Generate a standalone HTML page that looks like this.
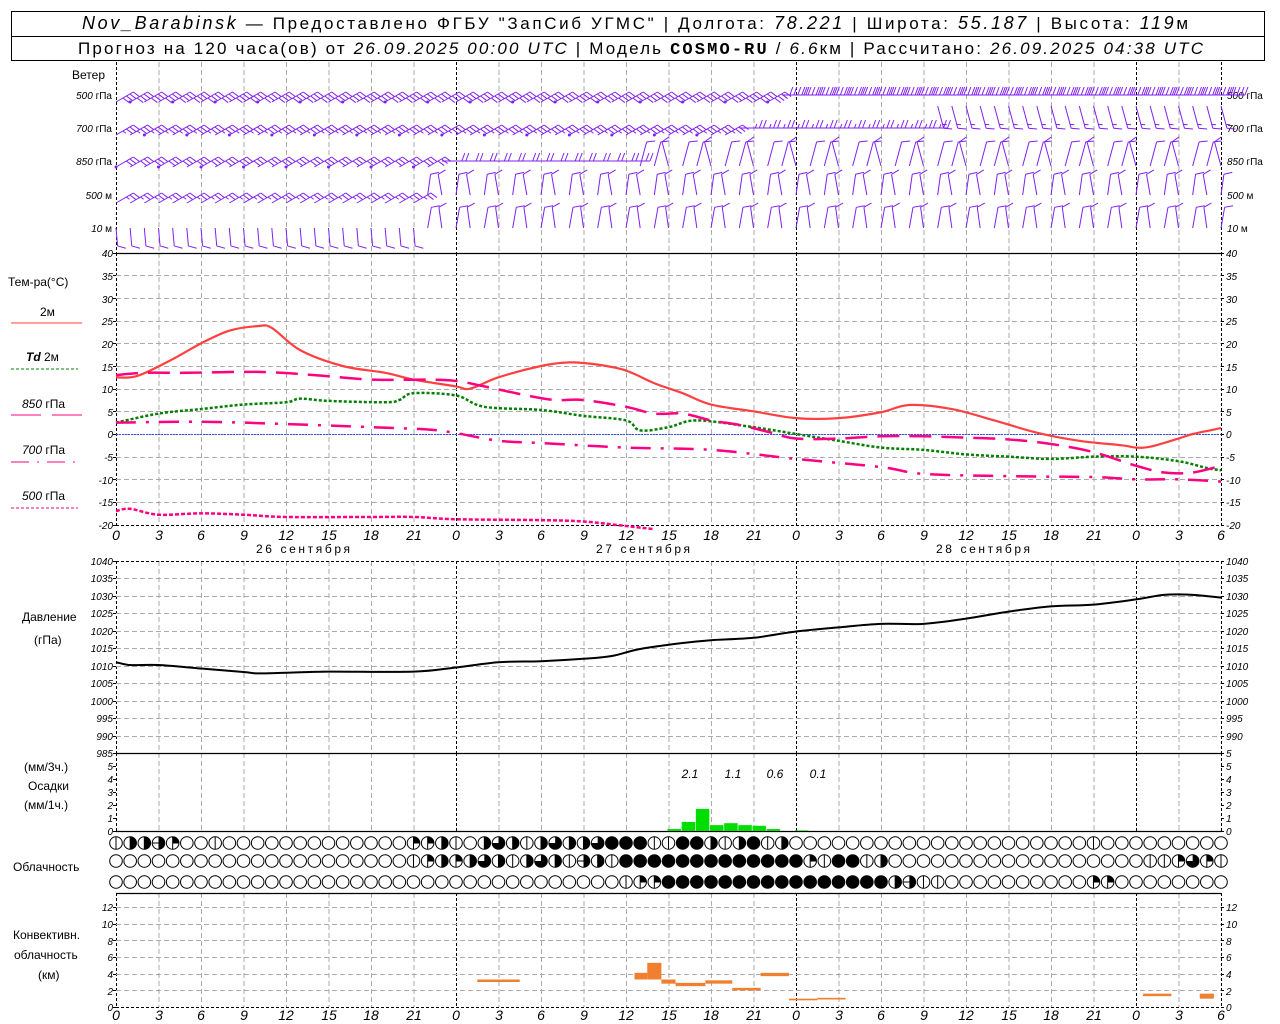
<!DOCTYPE html>
<html><head><meta charset="utf-8"><style>
html,body{margin:0;padding:0;background:#fff;width:1280px;height:1024px;overflow:hidden}
svg{display:block}
text{font-family:"Liberation Sans","DejaVu Sans",sans-serif;fill:#000}
.hd{font-size:17px}
.it{font-style:italic}
.ax{font-size:10px;font-style:italic}
.lb{font-size:12px}
.xl{font-size:14px;font-style:italic}
</style></head><body>
<svg id="s" width="1280" height="1024" viewBox="0 0 1280 1024" xmlns="http://www.w3.org/2000/svg">
<rect x="0" y="0" width="1280" height="1024" fill="#fff"/>
<rect x="11.5" y="11.5" width="1253" height="49" fill="none" stroke="#000"/>
<line x1="11" y1="36.5" x2="1265" y2="36.5" stroke="#000"/>
<g id="grid"></g>
<text class="hd" x="82" y="29" textLength="1106" lengthAdjust="spacing"><tspan class="it" font-size="18">Nov_Barabinsk</tspan> — Предоставлено ФГБУ "ЗапСиб УГМС" | Долгота: <tspan class="it" font-size="18">78.221</tspan> | Широта: <tspan class="it" font-size="18">55.187</tspan> | Высота: <tspan class="it" font-size="18">119</tspan>м</text>
<text class="hd" x="78" y="54" textLength="1125" lengthAdjust="spacing">Прогноз на 120 часа(ов) от <tspan class="it">26.09.2025 00:00 UTC</tspan>  | Модель <tspan font-family="Liberation Mono" font-weight="bold">COSMO-RU</tspan> / <tspan class="it">6.6</tspan>км | Рассчитано: <tspan class="it">26.09.2025 04:38 UTC</tspan></text>

<text class="lb" x="72" y="79">Ветер</text>
<g font-size="10">
<text x="112" y="99" text-anchor="end" style="font-size:10px"><tspan font-style="italic">500</tspan> гПа</text>
<text x="112" y="132" text-anchor="end" style="font-size:10px"><tspan font-style="italic">700</tspan> гПа</text>
<text x="112" y="165" text-anchor="end" style="font-size:10px"><tspan font-style="italic">850</tspan> гПа</text>
<text x="112" y="199" text-anchor="end" style="font-size:10px"><tspan font-style="italic">500</tspan> м</text>
<text x="112" y="232" text-anchor="end" style="font-size:10px"><tspan font-style="italic">10</tspan>   м</text>
<text x="1227" y="99" style="font-size:10px"><tspan font-style="italic">500</tspan> гПа</text>
<text x="1227" y="132" style="font-size:10px"><tspan font-style="italic">700</tspan> гПа</text>
<text x="1227" y="165" style="font-size:10px"><tspan font-style="italic">850</tspan> гПа</text>
<text x="1227" y="199" style="font-size:10px"><tspan font-style="italic">500</tspan> м</text>
<text x="1227" y="232" style="font-size:10px"><tspan font-style="italic">10</tspan>   м</text>
</g>

<text class="lb" x="8" y="286">Тем-ра(°C)</text>
<text class="lb" x="40" y="316" font-size="11">2м</text>
<line x1="11" y1="323" x2="82" y2="323" stroke="#ff4040"/>
<text class="lb" x="26" y="361" font-size="11"><tspan class="it" font-weight="bold">Td</tspan>  2м</text>
<line x1="11" y1="369" x2="78" y2="369" stroke="#008000" stroke-dasharray="3,2"/>
<text class="lb" x="22" y="408" font-size="11"><tspan font-style="italic">850</tspan> гПа</text>
<line x1="11" y1="415" x2="41" y2="415" stroke="#ff0080"/><line x1="52" y1="415" x2="82" y2="415" stroke="#ff0080"/>
<text class="lb" x="22" y="454" font-size="11"><tspan font-style="italic">700</tspan> гПа</text>
<line x1="11" y1="462" x2="78" y2="462" stroke="#ff0080" stroke-dasharray="18,8,2,8"/>
<text class="lb" x="22" y="500" font-size="11"><tspan font-style="italic">500</tspan> гПа</text>
<line x1="11" y1="508" x2="78" y2="508" stroke="#ff0080" stroke-dasharray="3,2"/>

<text class="lb" x="22" y="621">Давление</text>
<text class="lb" x="34" y="644">(гПа)</text>
<text class="lb" x="24" y="771">(мм/3ч.)</text>
<text class="lb" x="28" y="790">Осадки</text>
<text class="lb" x="24" y="809">(мм/1ч.)</text>
<text class="lb" x="13" y="871">Облачность</text>
<text class="lb" x="13" y="939">Конвективн.</text>
<text class="lb" x="14" y="959">облачность</text>
<text class="lb" x="38" y="979">(км)</text>

<g class="ax">
<text x="113" y="257" text-anchor="end">40</text><text x="113" y="303" text-anchor="end">30</text><text x="113" y="280" text-anchor="end">35</text><text x="113" y="325" text-anchor="end">25</text><text x="113" y="348" text-anchor="end">20</text><text x="113" y="371" text-anchor="end">15</text><text x="113" y="393" text-anchor="end">10</text><text x="113" y="416" text-anchor="end">5</text><text x="113" y="438" text-anchor="end">0</text><text x="113" y="461" text-anchor="end">-5</text><text x="113" y="484" text-anchor="end">-10</text><text x="113" y="506" text-anchor="end">-15</text><text x="113" y="529" text-anchor="end">-20</text>
<text x="1226" y="257">40</text><text x="1226" y="280">35</text><text x="1226" y="303">30</text><text x="1226" y="325">25</text><text x="1226" y="348">20</text><text x="1226" y="371">15</text><text x="1226" y="393">10</text><text x="1226" y="416">5</text><text x="1226" y="438">0</text><text x="1226" y="461">-5</text><text x="1226" y="484">-10</text><text x="1226" y="506">-15</text><text x="1226" y="529">-20</text>
<text x="113" y="565" text-anchor="end">1040</text><text x="113" y="582" text-anchor="end">1035</text><text x="113" y="600" text-anchor="end">1030</text><text x="113" y="617" text-anchor="end">1025</text><text x="113" y="635" text-anchor="end">1020</text><text x="113" y="652" text-anchor="end">1015</text><text x="113" y="670" text-anchor="end">1010</text><text x="113" y="687" text-anchor="end">1005</text><text x="113" y="705" text-anchor="end">1000</text><text x="113" y="722" text-anchor="end">995</text><text x="113" y="740" text-anchor="end">990</text><text x="113" y="757" text-anchor="end">985</text>
<text x="1226" y="565">1040</text><text x="1226" y="582">1035</text><text x="1226" y="600">1030</text><text x="1226" y="617">1025</text><text x="1226" y="635">1020</text><text x="1226" y="652">1015</text><text x="1226" y="670">1010</text><text x="1226" y="687">1005</text><text x="1226" y="705">1000</text><text x="1226" y="722">995</text><text x="1226" y="740">990</text>
<text x="1226" y="757">5</text><text x="1226" y="770">5</text><text x="1226" y="783">4</text><text x="1226" y="796">3</text><text x="1226" y="809">2</text><text x="1226" y="822">1</text><text x="1226" y="835">0</text>
<text x="113" y="770" text-anchor="end">5</text><text x="113" y="783" text-anchor="end">4</text><text x="113" y="796" text-anchor="end">3</text><text x="113" y="809" text-anchor="end">2</text><text x="113" y="822" text-anchor="end">1</text><text x="113" y="835" text-anchor="end">0</text>
<text x="113" y="911" text-anchor="end">12</text><text x="113" y="928" text-anchor="end">10</text><text x="113" y="945" text-anchor="end">8</text><text x="113" y="961" text-anchor="end">6</text><text x="113" y="978" text-anchor="end">4</text><text x="113" y="995" text-anchor="end">2</text><text x="113" y="1011" text-anchor="end">0</text>
<text x="1226" y="911">12</text><text x="1226" y="928">10</text><text x="1226" y="945">8</text><text x="1226" y="961">6</text><text x="1226" y="978">4</text><text x="1226" y="995">2</text><text x="1226" y="1011">0</text>
</g>
<g class="xl" text-anchor="middle">
<text x="116" y="540">0</text><text x="159" y="540">3</text><text x="201" y="540">6</text><text x="244" y="540">9</text><text x="286" y="540">12</text><text x="329" y="540">15</text><text x="371" y="540">18</text><text x="414" y="540">21</text><text x="456" y="540">0</text><text x="499" y="540">3</text><text x="541" y="540">6</text><text x="584" y="540">9</text><text x="626" y="540">12</text><text x="669" y="540">15</text><text x="711" y="540">18</text><text x="754" y="540">21</text><text x="796" y="540">0</text><text x="839" y="540">3</text><text x="881" y="540">6</text><text x="924" y="540">9</text><text x="966" y="540">12</text><text x="1009" y="540">15</text><text x="1051" y="540">18</text><text x="1094" y="540">21</text><text x="1136" y="540">0</text><text x="1179" y="540">3</text><text x="1221" y="540">6</text>
<text x="116" y="1020">0</text><text x="159" y="1020">3</text><text x="201" y="1020">6</text><text x="244" y="1020">9</text><text x="286" y="1020">12</text><text x="329" y="1020">15</text><text x="371" y="1020">18</text><text x="414" y="1020">21</text><text x="456" y="1020">0</text><text x="499" y="1020">3</text><text x="541" y="1020">6</text><text x="584" y="1020">9</text><text x="626" y="1020">12</text><text x="669" y="1020">15</text><text x="711" y="1020">18</text><text x="754" y="1020">21</text><text x="796" y="1020">0</text><text x="839" y="1020">3</text><text x="881" y="1020">6</text><text x="924" y="1020">9</text><text x="966" y="1020">12</text><text x="1009" y="1020">15</text><text x="1051" y="1020">18</text><text x="1094" y="1020">21</text><text x="1136" y="1020">0</text><text x="1179" y="1020">3</text><text x="1221" y="1020">6</text>
</g>
<g class="lb" text-anchor="middle" font-size="12">
<text x="303" y="553" textLength="94" lengthAdjust="spacing">26 сентября</text><text x="643" y="553" textLength="94" lengthAdjust="spacing">27 сентября</text><text x="983" y="553" textLength="94" lengthAdjust="spacing">28 сентября</text>
</g>
<g text-anchor="middle">
<text x="690" y="778" style="font-size:12px;font-style:italic">2.1</text><text x="733" y="778" style="font-size:12px;font-style:italic">1.1</text><text x="775" y="778" style="font-size:12px;font-style:italic">0.6</text><text x="818" y="778" style="font-size:12px;font-style:italic">0.1</text>
</g>
<g id="data"></g>
</svg>
<script>
(function(){
var NS="http://www.w3.org/2000/svg";
var G=document.getElementById('grid'),D=document.getElementById('data');
function el(p,tag,a){var e=document.createElementNS(NS,tag);for(var k in a)e.setAttribute(k,a[k]);p.appendChild(e);return e;}
function L(p,x1,y1,x2,y2,c,w,da){var a={x1:x1,y1:y1,x2:x2,y2:y2,stroke:c,'stroke-width':w||1};if(da)a['stroke-dasharray']=da;return el(p,'line',a);}
function X(h){return 116+h*340/24;}
var x0=116,x1=1221;
var segs=[[62,253],[253,525],[561,753],[753,831],[893,1007]];
for(var h=0;h<=78;h+=3){var x=X(h)+0.5;var day=(h%24==0)||h==78;
 segs.forEach(function(s){L(G,x,s[0],x,s[1],day?'#000':'#aaa',1,day?'3,2':'5,3');});}
for(var v=-20;v<=40;v+=5){var y=Math.round(434-v*272/60)+0.5;
 if(v==40)L(G,x0,y,x1,y,'#000',1.2);else if(v==-20)L(G,x0,y,x1,y,'#000',1,'3,2');else L(G,x0,y,x1,y,'#aaa',1,'5,3');
 L(G,x0-3,y,x0,y,'#000');L(G,x1,y,x1+3,y,'#000');}
L(G,x0,434.5,x1,434.5,'#3050ff',1,'2,1');
for(var p=985;p<=1040;p+=5){var y=Math.round(753-(p-985)*192/55)+0.5;
 if(p==985)L(G,x0,y,x1,y,'#000',1.2);else if(p==1040)L(G,x0,y,x1,y,'#000',1,'3,2');else L(G,x0,y,x1,y,'#aaa',1,'5,3');
 L(G,x0-3,y,x0,y,'#000');L(G,x1,y,x1+3,y,'#000');}
L(G,x0,831.5,x1,831.5,'#000',1.2);
for(var i=0;i<=5;i++){var y=831.5-i*13;L(G,x0-3,y,x0,y,'#000');L(G,x1,y,x1+3,y,'#000');}
L(G,x0,893.5,x1,893.5,'#000',1.2);
for(var k=0;k<=12;k+=2){var y=Math.round(1007-k*100/12)+0.5;
 if(k==0)L(G,x0,y,x1,y,'#000',1,'3,2');else L(G,x0,y,x1,y,'#aaa',1,'5,3');
 L(G,x0-3,y,x0,y,'#000');L(G,x1,y,x1+3,y,'#000');}

function path(pts,fx,fy,attrs){var P=pts.map(function(q){return [X(q[0]),fy(q[1])];});
 var d='M'+P[0][0]+','+P[0][1];
 for(var i=0;i<P.length-1;i++){var p0=P[i-1]||P[i],p1=P[i],p2=P[i+1],p3=P[i+2]||p2;
  d+=' C'+(p1[0]+(p2[0]-p0[0])/6)+','+(p1[1]+(p2[1]-p0[1])/6)+' '+(p2[0]-(p3[0]-p1[0])/6)+','+(p2[1]-(p3[1]-p1[1])/6)+' '+p2[0]+','+p2[1];}
 attrs.d=d;attrs.fill='none';el(D,'path',attrs);}
function TY(v){return 434-v*272/60;}
path([[0,12.5],[1.5,12.8],[4,16.5],[6,20],[8,22.8],[10,23.8],[11,23.4],[13,18.5],[16,15],[19,13.5],[21,12],[24,10.5],[25,10],[27,12.5],[30,15],[32,15.8],[34,15.3],[36,14],[38,11.2],[40,9],[42,6.5],[45,5],[48,3.5],[51,3.5],[54,4.8],[56,6.4],[59,5.5],[62,3],[65,0.3],[68,-1.5],[71,-2.5],[72,-3],[73,-2.8],[75,-1],[76,0],[78,1.3]],X,TY,{stroke:'#ff4040','stroke-width':2.2});
path([[0,2.5],[3,4.5],[6,5.5],[9,6.5],[12,7],[13,7.8],[15,7.3],[19,7],[20,7.5],[21,9],[24,8.5],[26,6],[30,5.3],[33,4],[36,3],[37,0.8],[39,1.5],[41,3],[45,1.5],[48,0],[51,-1.5],[54,-3],[57,-3.5],[60,-4.5],[63,-5],[66,-5.5],[69,-5],[72,-5],[75,-6],[77,-7.5],[78,-8]],X,TY,{stroke:'#008000','stroke-width':2.5,'stroke-dasharray':'3,2'});
path([[0,13],[2,13.5],[5,13.5],[10,13.7],[14,13],[18,12],[22,12],[24,11.7],[26,10.5],[29,8.5],[31,7.5],[33,7.5],[36,6],[38,4.5],[40,4.5],[42,3],[44,2],[46,0.5],[48,-1],[51,-1],[54,-0.5],[57,-0.5],[60,-0.8],[63,-1.2],[66,-2.2],[69,-4],[72,-7],[74,-8.5],[76,-8.5],[78,-7]],X,TY,{stroke:'#ff0080','stroke-width':2.5,'stroke-dasharray':'22,10'});
path([[0,2.5],[6,2.7],[12,2.2],[18,1.5],[22,1],[24,0.2],[27,-1.5],[30,-2],[36,-3],[42,-3.5],[48,-5.5],[54,-7.3],[57,-8.8],[63,-9.3],[69,-9.5],[72,-10],[75,-10],[78,-10.5]],X,TY,{stroke:'#ff0080','stroke-width':2.5,'stroke-dasharray':'20,10,3,10'});
path([[0,-17],[1,-16.5],[3,-17.8],[6,-17.5],[9,-17.8],[12,-18.3],[18,-18.3],[21,-18.3],[24,-18.8],[30,-19],[33,-19.3],[36,-20.3],[38,-21]],X,TY,{stroke:'#ff0080','stroke-width':2.5,'stroke-dasharray':'4,2'});
function PY(p){return 753-(p-985)*192/55;}
path([[0,1011],[1,1010.2],[3,1010.2],[6,1009.2],[9,1008.2],[10,1007.8],[12,1008],[15,1008.3],[21,1008.3],[24,1009.5],[27,1011],[30,1011.3],[33,1012],[35,1012.8],[37,1014.8],[40,1016.5],[42,1017.3],[45,1018],[48,1019.8],[51,1021],[54,1022],[57,1022],[60,1023.5],[63,1025.5],[66,1027],[69,1027.5],[72,1029],[74,1030.3],[76,1030.3],[78,1029.5]],X,PY,{stroke:'#000','stroke-width':2});
[[39,0.15],[40,0.7],[41,1.7],[42,0.45],[43,0.6],[44,0.45],[45,0.4],[46,0.15],[48,0.05]].forEach(function(b){
 var y=831-b[1]*13;el(D,'rect',{x:X(b[0])-1,y:y,width:13.5,height:831-y,fill:'#00dd00'});});
function CY(k){return 1007-k*100/12;}
[[25.5,28.5,3,3.3],[36.6,37.5,3.3,4.1],[37.5,38.5,3.3,5.3],[38.5,39.5,2.8,3.3],[39.5,41.6,2.5,2.9],[41.6,43.5,2.8,3.2],[43.5,45.5,2,2.3],[45.5,47.5,3.7,4.1],[47.5,49.5,0.8,1.0],[49.5,51.5,0.9,1.1],[72.5,74.5,1.3,1.6],[76.5,77.5,1.0,1.6]].forEach(function(b){
 el(D,'rect',{x:X(b[0]),y:CY(b[3]),width:X(b[1])-X(b[0]),height:CY(b[2])-CY(b[3]),fill:'#f08030'});});
var rows=[
 [843,"122630010000000000000332102421242245551155212512000000000000000000000100000000000"],
 [861,"000000000000000000000132324212421621555555555555531551200000000000000000011343100000"],
 [882,"000000000000000000000000000000000000133555555555555555526110000000000330000000000613136"]];
rows.forEach(function(r){for(var h=0;h<=78;h++){var t=+(r[1][h]||0);sym(X(h),r[0],t);}});
function sym(cx,cy,t){var R=6.3;
 if(t==5){el(D,'circle',{cx:cx,cy:cy,r:R,fill:'#000',stroke:'#000'});return;}
 el(D,'circle',{cx:cx,cy:cy,r:R,fill:'#fff',stroke:'#000','stroke-width':1});
 if(t==1||t==3||t==2)L(D,cx,cy-R,cx,cy+R,'#000',1);
 if(t==2||t==6)el(D,'path',{d:'M'+cx+','+(cy-R)+' A'+R+','+R+' 0 0 1 '+cx+','+(cy+R)+' Z',fill:'#000'});
 if(t==6)L(D,cx-R,cy,cx,cy,'#000',1);
 if(t==3){el(D,'path',{d:'M'+cx+','+cy+' L'+cx+','+(cy-R)+' A'+R+','+R+' 0 0 1 '+(cx+R)+','+cy+' Z',fill:'#000'});L(D,cx,cy,cx+R,cy,'#000',1);}
 if(t==4)el(D,'path',{d:'M'+cx+','+cy+' L'+cx+','+(cy-R)+' A'+R+','+R+' 0 1 1 '+(cx-R)+','+cy+' Z',fill:'#000'});
}
var C='#8020f0';
function barb(x,y,ang,nf,side,Ls,fl){Ls=Ls||24;fl=fl||8;var a=ang*Math.PI/180,ux=Math.sin(a),uy=-Math.cos(a),nx=-uy*side,ny=ux*side;
 var tx=x+ux*Ls,ty=y+uy*Ls;L(D,x,y,tx,ty,C,1);
 for(var k=0;k<Math.floor(nf);k++){var bx=tx-ux*k*4,by=ty-uy*k*4;L(D,bx,by,bx+nx*fl+ux*3,by+ny*fl+uy*3,C,1);}
 if(nf%1){var k=Math.floor(nf)||1;var bx=tx-ux*k*4,by=ty-uy*k*4;L(D,bx,by,bx+nx*fl/2+ux*1.5,by+ny*fl/2+uy*1.5,C,1);}
}
function dot(x,y){el(D,'circle',{cx:x,cy:y,r:1.5,fill:C});}
for(var h=0;h<=78;h++){var x=X(h);
 if(h<47){barb(x,102,60,4,1,20,7);if(h%3==1)dot(x,102);}else barb(x,95,90,5,-1);
 if(h<44){barb(x,135,60,3.5,1,20,7);if(h%3==2)dot(x,135);}else if(h<58)barb(x,128,90,2.5,-1);else barb(x,106,165,1.5,-1,23);
 if(h<23){barb(x,167,60,3,1,20,7);if(h%3==0)dot(x,167);}else if(h<37)barb(x,161,90,2,-1);else barb(x,166,(h%3==0?345:15),1,1,25);
 if(h<22){barb(x,203,60,2.5,1,20,7);}else barb(x,195,(h%2?350:8),1,1,21);
 if(h<22)barb(x,228,175,1,-1,18);else barb(x,228,(h%2?352:10),1,1,21);
}
})();
</script>
</body></html>
